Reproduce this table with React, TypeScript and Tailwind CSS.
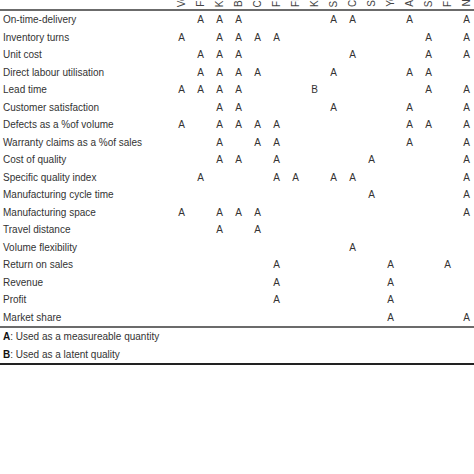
import React from "react"

type Row = {
  label: string
  marks: Record<number, "A" | "B">
}

const heads = [
  "Vokurka",
  "Fisher",
  "Kaplan",
  "Bititci",
  "Chenhall",
  "Fitzgerald",
  "Flapper",
  "Kueng",
  "Sink",
  "Chan",
  "Sinclair",
  "Yeniyurt",
  "Ahmad",
  "Schmenner",
  "Fullerton",
  "Neely",
]

const a = (...cols: number[]) => Object.fromEntries(cols.map((c) => [c, "A"])) as Record<number, "A" | "B">

const rows: Row[] = [
  { label: "On-time-delivery", marks: a(1, 2, 3, 8, 9, 12, 15) },
  { label: "Inventory turns", marks: a(0, 2, 3, 4, 5, 13, 15) },
  { label: "Unit cost", marks: a(1, 2, 3, 9, 13, 15) },
  { label: "Direct labour utilisation", marks: a(1, 2, 3, 4, 8, 12, 13) },
  { label: "Lead time", marks: { ...a(0, 1, 2, 3, 13, 15), 7: "B" } },
  { label: "Customer satisfaction", marks: a(2, 3, 8, 12, 15) },
  { label: "Defects as a %of volume", marks: a(0, 2, 3, 4, 5, 12, 13, 15) },
  { label: "Warranty claims as a %of sales", marks: a(2, 4, 5, 12, 15) },
  { label: "Cost of quality", marks: a(2, 3, 5, 10, 15) },
  { label: "Specific quality index", marks: a(1, 5, 6, 8, 9, 15) },
  { label: "Manufacturing cycle time", marks: a(10, 15) },
  { label: "Manufacturing space", marks: a(0, 2, 3, 4, 15) },
  { label: "Travel distance", marks: a(2, 4) },
  { label: "Volume flexibility", marks: a(9) },
  { label: "Return on sales", marks: a(5, 11, 14) },
  { label: "Revenue", marks: a(5, 11) },
  { label: "Profit", marks: a(5, 11) },
  { label: "Market share", marks: a(11, 15) },
]

export default function App() {
  return (
    <div className="h-[474px] w-[474px] overflow-hidden bg-white font-['Liberation_Sans',Arial,sans-serif] text-[10px] text-[#333]">
      <div className="w-[476px]">
        {/* column heads run upward and are mostly above the frame */}
        <div className="flex h-[9px] overflow-hidden pb-[2px]">
          <div className="w-[172px] shrink-0" />
          {heads.map((h) => (
            <div key={h} className="flex w-[19px] shrink-0 items-end justify-center overflow-hidden">
              <span className="rotate-180 leading-none whitespace-nowrap text-[#444] [writing-mode:vertical-rl]">{h}</span>
            </div>
          ))}
        </div>
        <div className="h-[2px] w-[474px] bg-[#6b6b6b]" />
        {rows.map((r) => (
          <div key={r.label} className="flex h-[17.5px] items-center">
            <div className="w-[172px] shrink-0 pl-[3px]">{r.label}</div>
            {heads.map((h, i) => (
              <div key={h} className="w-[19px] shrink-0 text-center">
                {r.marks[i] ?? ""}
              </div>
            ))}
          </div>
        ))}
        <div className="h-[2px] w-[474px] bg-[#6b6b6b]" />
        <div className="flex h-[17.5px] items-center pl-[3px]">
          <b className="text-[#111]">A</b>: Used as a measureable quantity
        </div>
        <div className="flex h-[17.5px] items-center pl-[3px]">
          <b className="text-[#111]">B</b>: Used as a latent quality
        </div>
        <div className="h-[2px] w-[474px] bg-[#222]" />
      </div>
    </div>
  )
}
